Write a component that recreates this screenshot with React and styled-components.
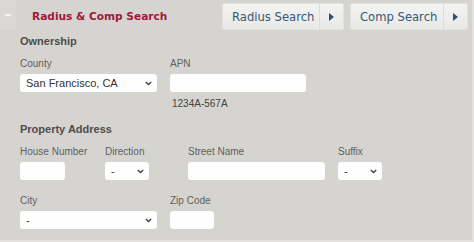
import React from 'react';
import styled, { createGlobalStyle } from 'styled-components';

const GlobalStyle = createGlobalStyle`
  html, body {
    margin: 0;
    padding: 0;
    background: #d6d4d0;
  }
  * { box-sizing: border-box; }
`;

const Panel = styled.div`
  width: 474px;
  height: 242px;
  background: #d6d4d0;
  border-right: 2px solid #e4e2df;
  border-bottom: 2px solid #e4e2df;
  overflow: hidden;
  font-family: "Liberation Sans", Arial, sans-serif;
`;

const Header = styled.div`
  display: flex;
  align-items: center;
  height: 34px;
`;

const Toggle = styled.div`
  width: 16px;
  height: 30px;
  align-self: flex-start;
  display: flex;
  align-items: center;
  justify-content: center;
  background: #dad8d4;

  &::after {
    content: '';
    width: 6px;
    height: 2px;
    background: #f4f3f1;
  }
`;

const Title = styled.div`
  margin-left: 16px;
  margin-top: -3px;
  font-family: "DejaVu Sans", Verdana, sans-serif;
  font-weight: bold;
  font-size: 10.6px;
  color: #a3173d;
`;

const ButtonGroup = styled.div`
  margin-left: auto;
  display: flex;
  gap: 6px;
  padding-right: 4px;
  align-self: flex-start;
  padding-top: 3px;
`;

const NavButton = styled.div`
  display: flex;
  height: 27px;
  width: ${p => p.$w}px;
  background: linear-gradient(#f3f3f2, #e9e9e8);
  border: 1px solid #e2e2e0;
  border-radius: 2px;
  color: #365878;
  font-family: "DejaVu Sans", Verdana, sans-serif;
  font-size: 11.6px;
`;

const ButtonLabel = styled.div`
  flex: 1;
  display: flex;
  align-items: center;
  padding-left: 9px;
  border-right: 1px solid #dcdcda;
`;

const ButtonArrow = styled.div`
  width: 23px;
  display: flex;
  align-items: center;
  justify-content: center;

  &::after {
    content: '';
    border-left: 5px solid #2f4d6f;
    border-top: 4px solid transparent;
    border-bottom: 4px solid transparent;
  }
`;

const Body = styled.div`
  padding: 0 0 0 20px;
`;

const SectionTitle = styled.div`
  font-weight: bold;
  font-size: 11px;
  color: #4d4d4d;
  line-height: 14px;
  margin-bottom: ${p => p.$mb}px;
`;

const Row = styled.div`
  display: flex;
  align-items: flex-start;
  margin-bottom: ${p => p.$mb || 0}px;
`;

const Field = styled.div`
  display: flex;
  flex-direction: column;
  width: ${p => p.$w}px;
  flex-shrink: 0;
`;

const Label = styled.div`
  font-size: 10px;
  line-height: 12px;
  color: #5f5f5f;
  margin-bottom: 4px;
  white-space: nowrap;
`;

const Input = styled.div`
  height: 18px;
  width: ${p => p.$w}px;
  background: #fefefe;
  border-radius: 3px;
`;

const Select = styled.div`
  height: 18px;
  width: ${p => p.$w}px;
  background: #fefefe;
  border-radius: 3px;
  display: flex;
  align-items: center;
  justify-content: space-between;
  padding: 0 5px 0 6px;
  font-size: 11px;
  color: #333;

  svg {
    flex-shrink: 0;
  }
`;

const Hint = styled.div`
  font-size: 10px;
  color: #444;
  line-height: 12px;
  margin-top: 6px;
  padding-left: 2px;
`;

const Chevron = () => (
  <svg width="7" height="5" viewBox="0 0 7 5">
    <path d="M0.8 0.9 L3.5 3.6 L6.2 0.9" fill="none" stroke="#444" strokeWidth="1.4" />
  </svg>
);

const App = () => (
  <Panel>
    <GlobalStyle />
    <Header>
      <Toggle />
      <Title>Radius &amp; Comp Search</Title>
      <ButtonGroup>
        <NavButton $w={122}>
          <ButtonLabel>Radius Search</ButtonLabel>
          <ButtonArrow />
        </NavButton>
        <NavButton $w={118}>
          <ButtonLabel>Comp Search</ButtonLabel>
          <ButtonArrow />
        </NavButton>
      </ButtonGroup>
    </Header>
    <Body>
      <SectionTitle $mb={10}>Ownership</SectionTitle>
      <Row $mb={12}>
        <Field $w={150}>
          <Label>County</Label>
          <Select $w={137}>
            <span>San Francisco, CA</span>
            <Chevron />
          </Select>
        </Field>
        <Field $w={150}>
          <Label>APN</Label>
          <Input $w={136} />
          <Hint>1234A-567A</Hint>
        </Field>
      </Row>
      <SectionTitle $mb={10}>Property Address</SectionTitle>
      <Row $mb={15}>
        <Field $w={85}>
          <Label>House Number</Label>
          <Input $w={45} />
        </Field>
        <Field $w={83}>
          <Label>Direction</Label>
          <Select $w={44}>
            <span>-</span>
            <Chevron />
          </Select>
        </Field>
        <Field $w={150}>
          <Label>Street Name</Label>
          <Input $w={137} />
        </Field>
        <Field $w={50}>
          <Label>Suffix</Label>
          <Select $w={44}>
            <span>-</span>
            <Chevron />
          </Select>
        </Field>
      </Row>
      <Row>
        <Field $w={150}>
          <Label>City</Label>
          <Select $w={137}>
            <span>-</span>
            <Chevron />
          </Select>
        </Field>
        <Field $w={50}>
          <Label>Zip Code</Label>
          <Input $w={44} />
        </Field>
      </Row>
    </Body>
  </Panel>
);

export default App;
